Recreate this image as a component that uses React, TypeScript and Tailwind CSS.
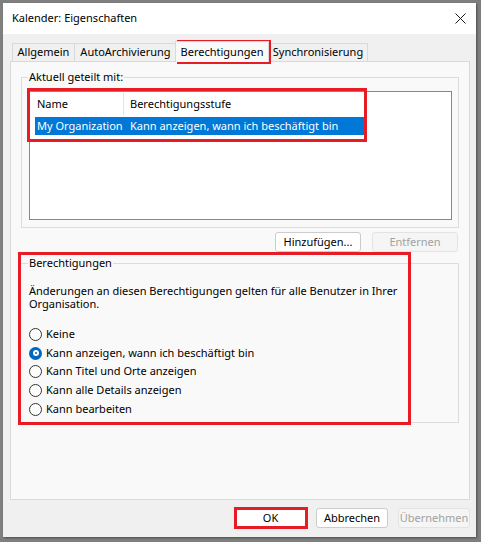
const font = { fontFamily: '"Segoe UI", "Noto Sans", sans-serif' };

const Tab = ({ label, active, w }: { label: string; active?: boolean; w: string }) =>
  active ? (
    <div className={`relative z-10 -mb-px flex h-[21px] items-center justify-center border border-b-0 border-[#d9d9d9] bg-[#f9f9f9] ${w}`}>
      {label}
    </div>
  ) : (
    <div className={`mt-[3px] flex h-[18px] items-center justify-center border border-b-0 border-[#d9d9d9] bg-[#f0f0f0] ${w}`}>
      {label}
    </div>
  );

const Radio = ({ label, checked }: { label: string; checked?: boolean }) => (
  <div className="flex h-[18.7px] items-center gap-[4px]">
    {checked ? (
      <span className="flex h-[13px] w-[13px] items-center justify-center rounded-full bg-[#0067c0]">
        <span className="flex h-[6px] w-[6px] items-center justify-center rounded-full bg-white">
          <span className="h-[2px] w-[2px] rounded-full bg-[#0067c0]" />
        </span>
      </span>
    ) : (
      <span className="h-[13px] w-[13px] rounded-full border border-[#333333] bg-white" />
    )}
    <span>{label}</span>
  </div>
);

const Button = ({ label, disabled, w }: { label: string; disabled?: boolean; w: string }) => (
  <div
    className={`flex h-[20px] items-center justify-center whitespace-nowrap rounded-[3px] border ${w} ${
      disabled ? 'border-[#e3e3e3] bg-[#f5f5f5] text-[#a2a2a2]' : 'border-[#cccccc] bg-white text-black'
    }`}
  >
    {label}
  </div>
);

export default function App() {
  return (
    <div className="relative h-[542px] w-[481px] overflow-hidden bg-[#7f7f7f] pl-[3px] pt-[3px] text-[11px] text-black" style={font}>
      <div className="flex h-[534px] w-[473px] flex-col bg-[#f0f0f0] shadow-[1px_1px_2px_rgba(0,0,0,0.4)]">
        {/* title bar */}
        <div className="flex h-[31px] items-center justify-between bg-white pl-[9px] pr-[9px]">
          <span className="text-[11px]">Kalender: Eigenschaften</span>
          <svg width="11" height="11" viewBox="0 0 11 11" className="mr-[1px]">
            <path d="M0.5 0.5 L10.5 10.5 M10.5 0.5 L0.5 10.5" stroke="#1a1a1a" strokeWidth="1" />
          </svg>
        </div>

        {/* tabs */}
        <div className="flex flex-col px-[7px] pt-[6px]">
          <div className="flex items-end pl-[2px]">
            <Tab label="Allgemein" w="w-[63px]" />
            <Tab label="AutoArchivierung" w="w-[103px] -ml-px" />
            <Tab label="Berechtigungen" w="w-[94px] -ml-[2px]" active />
            <Tab label="Synchronisierung" w="w-[100px] -ml-px" />
          </div>

          {/* tab panel */}
          <div className="flex h-[439px] w-[460px] flex-col border border-[#d9d9d9] bg-[#f9f9f9] px-[10px] pt-[9px]">
            {/* group: shared with */}
            <div className="relative mt-[6px] h-[151px] border border-[#dcdcdc] px-[7px] pt-[13px]">
              <span className="absolute -top-[9px] left-[6px] bg-[#f9f9f9] px-[1px]">Aktuell geteilt mit:</span>
              <div className="h-[129px] w-[423px] border border-[#828790] bg-white pl-[5px] pt-[1px]">
                <div className="flex h-[22px] items-center">
                  <div className="flex h-full w-[89px] items-center border-r border-[#e5e5e5] pl-[2px]">Name</div>
                  <div className="pl-[6px]">Berechtigungsstufe</div>
                </div>
                <div className="mt-[2px] flex h-[18px] w-[329px] items-center whitespace-nowrap bg-[#0078d7] text-white">
                  <div className="w-[89px] pl-[2px]">My Organization</div>
                  <div className="pl-[6px]">Kann anzeigen, wann ich beschäftigt bin</div>
                </div>
              </div>
            </div>

            <div className="mt-[4px] flex justify-end gap-[11px] pr-[1px]">
              <Button label="Hinzufügen..." w="w-[86px]" />
              <Button label="Entfernen" w="w-[86px]" disabled />
            </div>

            {/* group: permissions */}
            <div className="relative mt-[11px] -ml-[1px] h-[160px] border border-[#dcdcdc] px-[8px] pt-[20px]">
              <span className="absolute -top-[9px] left-[7px] bg-[#f9f9f9] px-[1px]">Berechtigungen</span>
              <p className="leading-[13px]">
                Änderungen an diesen Berechtigungen gelten für alle Benutzer in Ihrer Organisation.
              </p>
              <div className="mt-[15px] flex flex-col">
                <Radio label="Keine" />
                <Radio label="Kann anzeigen, wann ich beschäftigt bin" checked />
                <Radio label="Kann Titel und Orte anzeigen" />
                <Radio label="Kann alle Details anzeigen" />
                <Radio label="Kann bearbeiten" />
              </div>
            </div>
          </div>
        </div>

        {/* dialog buttons */}
        <div className="mt-[8px] flex justify-end gap-[10px] pr-[6px]">
          <Button label="OK" w="w-[71px] border-[#0078d7]" />
          <Button label="Abbrechen" w="w-[72px]" />
          <Button label="Übernehmen" w="w-[72px]" disabled />
        </div>
      </div>

      {/* red annotation boxes */}
      <div className="pointer-events-none absolute left-[177px] top-[40px] h-[24px] w-[94px] border-[3px] border-[#e81c24]" />
      <div className="pointer-events-none absolute left-[27px] top-[88px] h-[54px] w-[340px] border-[3px] border-[#e81c24]" />
      <div className="pointer-events-none absolute left-[18px] top-[252px] h-[173px] w-[393px] border-[3px] border-[#e81c24]" />
      <div className="pointer-events-none absolute left-[234px] top-[507px] h-[22px] w-[74px] border-[3px] border-[#e81c24]" />
    </div>
  );
}
